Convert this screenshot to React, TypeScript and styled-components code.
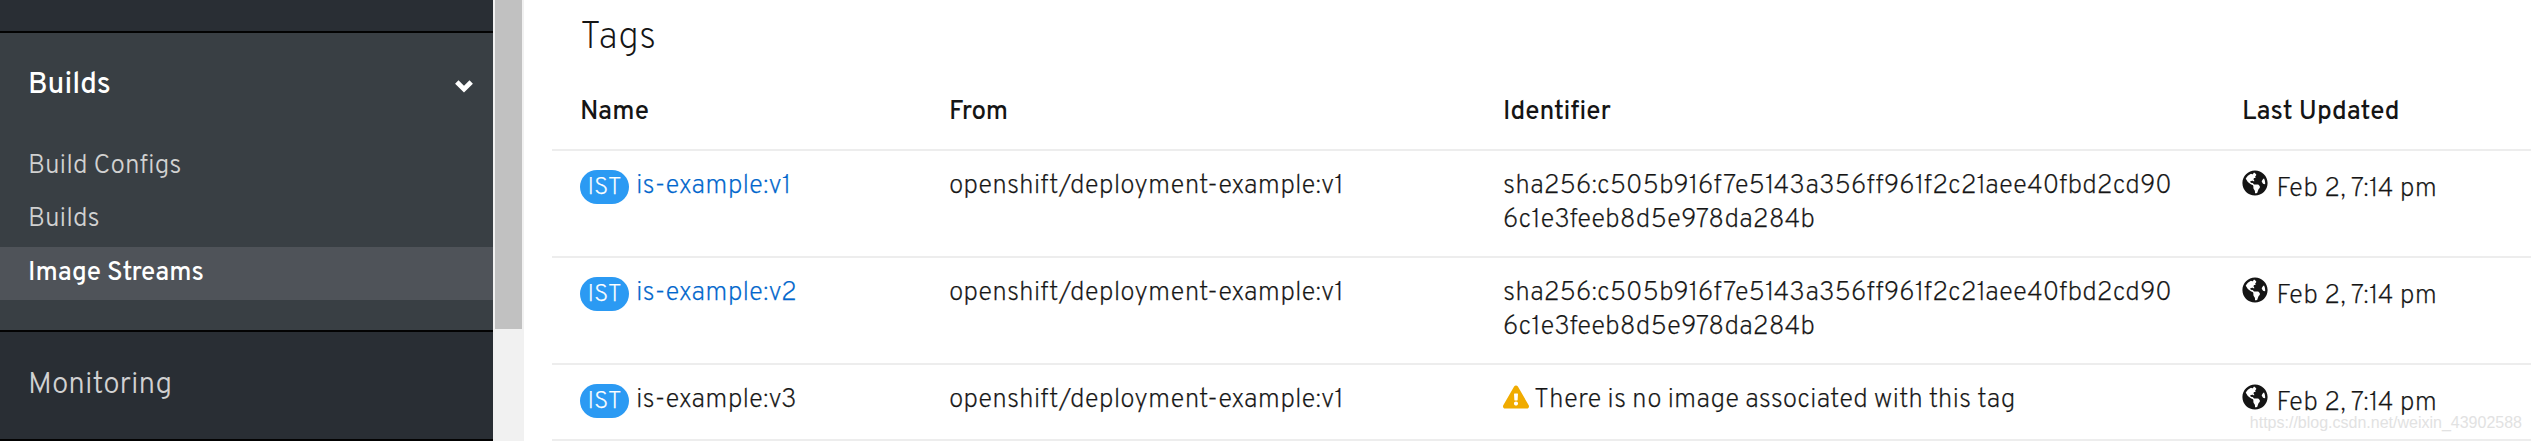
import React from 'react';
import styled, { createGlobalStyle, css } from 'styled-components';
import { FaExclamationTriangle, FaGlobeAmericas } from 'react-icons/fa';

const Global = createGlobalStyle`
  * { box-sizing: border-box; }
  body {
    margin: 0;
    background: #fff;
    color: #151515;
    font-family: Overpass, Roboto, "Liberation Sans", sans-serif;
    font-size: 26.2px;
    font-weight: 300;
    line-height: 34px;
  }
`;

const Page = styled.div`
  display: flex;
  width: 100%;
  height: 441px;
  overflow: hidden;
  position: relative;
`;

const Sidebar = styled.nav`
  flex: 0 0 493px;
  height: 441px;
  overflow: hidden;
  background: #292e34;
  color: #d1d1d1;
`;

const PreviousGroup = styled.div`
  height: 31px;
`;

const NavGroup = styled.section<{ $open?: boolean }>`
  height: ${p => (p.$open ? 299 : 109)}px;
  border-top: 2px solid #030303;
  background: ${p => (p.$open ? '#393f44' : '#292e34')};
`;

const NavHeading = styled.div<{ $open?: boolean }>`
  display: flex;
  justify-content: space-between;
  align-items: center;
  height: 104px;
  padding: ${p => (p.$open ? 2 : 4)}px 19px 0 28px;
  font-size: ${p => (p.$open ? 29.4 : 29.8)}px;
  font-weight: ${p => (p.$open ? 500 : 300)};
  color: ${p => (p.$open ? '#fff' : '#d1d1d1')};
`;

const Chevron = styled.svg`
  width: 20px;
  height: 14px;
`;

const NavList = styled.ul`
  list-style: none;
  margin: 0;
  padding: 4px 0 0;
`;

const NavItem = styled.li<{ $active?: boolean }>`
  height: 53px;
  padding: 9px 28px 0;
  ${p =>
    p.$active &&
    css`
      background: #4f5359;
      color: #fff;
      font-size: 26px;
      font-weight: 500;
      padding-top: 10px;
    `}
`;

const ScrollTrack = styled.div`
  flex: 0 0 31px;
  padding: 0 2px;
  background: #f1f1f1;
`;

const ScrollThumb = styled.div`
  width: 27px;
  height: 329px;
  background: #c1c1c1;
`;

const Main = styled.main`
  flex: 1;
  padding-left: 28px;
`;

const Title = styled.h2`
  height: 71px;
  margin: 0;
  padding: 15px 28px 0;
  font-size: 37.2px;
  font-weight: 200;
  line-height: 48px;
`;

const Row = styled.div<{ $height: number; $head?: boolean }>`
  display: grid;
  grid-template-columns: 369px 554px 739px 1fr;
  height: ${p => p.$height}px;
  padding: ${p => (p.$head ? 25 : 19)}px 0 0 28px;
  border-bottom: 2px solid #ededed;
  ${p =>
    p.$head
      ? css`
          font-size: 26px;
          font-weight: 500;
        `
      : css`
          font-size: 26.4px;
          font-weight: 200;
          -webkit-text-stroke: 0.25px currentColor;
        `}
`;

const Cell = styled.div`
  white-space: nowrap;
`;

const Resource = styled.div`
  display: flex;
`;

const Badge = styled.span`
  width: 49px;
  height: 34px;
  margin-right: 7px;
  padding-top: 1px;
  border-radius: 17px;
  background: #2b9af3;
  color: #fff;
  font-size: 24.5px;
  line-height: 33px;
  text-align: center;
`;

const Link = styled.a`
  color: #06c;
`;

const Digest = styled.div`
  width: 682px;
  white-space: normal;
  word-break: break-all;
`;

const Warning = styled.div`
  display: flex;

  svg {
    width: 26px;
    height: 24px;
    margin: 1px 5px 0 0;
    flex: none;
    color: #f0ab00;
  }
`;

const Timestamp = styled.div`
  display: flex;

  svg {
    width: 26px;
    height: 26px;
    margin-right: 8.5px;
    flex: none;
  }

  span {
    padding-top: 3px;
    letter-spacing: 0.2px;
  }
`;

const Watermark = styled.div`
  position: absolute;
  right: 9px;
  bottom: 8px;
  font: 400 16px/20px "Liberation Sans", sans-serif;
  color: #e2e2e2;
`;

const digest = 'sha256:c505b916f7e5143a356ff961f2c21aee40fbd2cd906c1e3feeb8d5e978da284b';

const tags = [
  { name: 'is-example:v1', digest, height: 107 },
  { name: 'is-example:v2', digest, height: 107 },
  { name: 'is-example:v3', digest: null, height: 76 },
];

export default function App() {
  return (
    <Page>
      <Global />
      <Sidebar>
        <PreviousGroup />
        <NavGroup $open>
          <NavHeading $open>
            <span>Builds</span>
            <Chevron viewBox="0 0 20 14">
              <path d="M2.8 3 10 10.2 17.2 3" fill="none" stroke="#fff" strokeWidth="4.8" />
            </Chevron>
          </NavHeading>
          <NavList>
            <NavItem>Build Configs</NavItem>
            <NavItem>Builds</NavItem>
            <NavItem $active>Image Streams</NavItem>
          </NavList>
        </NavGroup>
        <NavGroup>
          <NavHeading>Monitoring</NavHeading>
        </NavGroup>
        <NavGroup />
      </Sidebar>
      <ScrollTrack>
        <ScrollThumb />
      </ScrollTrack>
      <Main>
        <Title>Tags</Title>
        <Row $height={80} $head>
          <Cell>Name</Cell>
          <Cell>From</Cell>
          <Cell>Identifier</Cell>
          <Cell>Last Updated</Cell>
        </Row>
        {tags.map(tag => (
          <Row key={tag.name} $height={tag.height}>
            <Resource>
              <Badge>IST</Badge>
              {tag.digest ? <Link>{tag.name}</Link> : <span>{tag.name}</span>}
            </Resource>
            <Cell>openshift/deployment-example:v1</Cell>
            {tag.digest ? (
              <Digest>{tag.digest}</Digest>
            ) : (
              <Warning>
                <FaExclamationTriangle />
                There is no image associated with this tag
              </Warning>
            )}
            <Timestamp>
              <FaGlobeAmericas />
              <span>Feb 2, 7:14 pm</span>
            </Timestamp>
          </Row>
        ))}
      </Main>
      <Watermark>https://blog.csdn.net/weixin_43902588</Watermark>
    </Page>
  );
}
